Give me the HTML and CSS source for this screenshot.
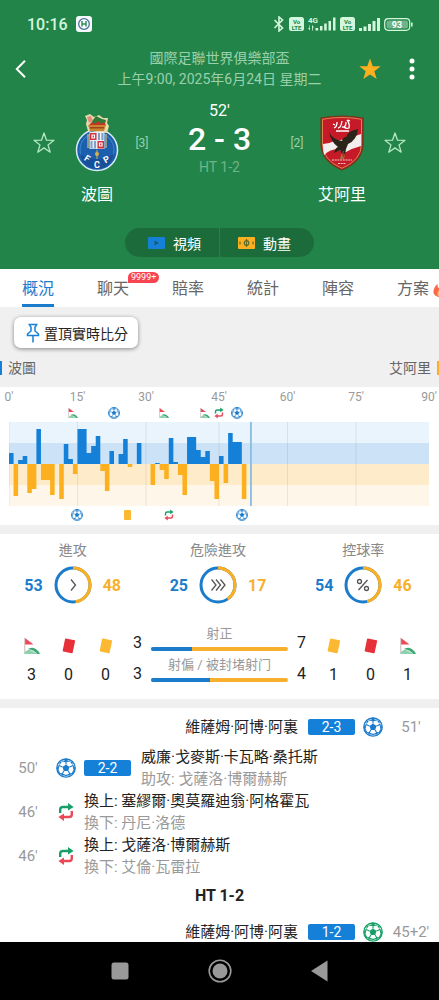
FILE: index.html
```html
<!DOCTYPE html>
<html lang="zh-Hant">

<head>
    <meta charset="UTF-8">
    <meta name="viewport" content="width=device-width, initial-scale=1">
    <title>波圖 2 - 3 艾阿里</title>
    <link rel="stylesheet" href="styles.css">
</head>

<body>
    <!-- 共用圖示 -->
    <svg class="sprite" aria-hidden="true">
        <symbol id="ball" viewBox="0 0 20 20">
            <circle cx="10" cy="10" r="9.2" fill="#fff" stroke="currentColor" stroke-width="1.3" />
            <path fill="currentColor" d="M10 6.4l3.5 2.5-1.3 4.1H7.8L6.5 8.9zM6.8 1.4L10 3.4l3.2-2L10 .6zM1.2 7.4l1 3.6-1.5.6zM3.6 4l2.6-.4L3.2 7.2zM18.8 7.4l-1 3.6 1.5.6zM16.4 4l-2.6-.4 3 3.6zM3.4 15l3.4.3 1 3.5zM16.6 15l-3.4.3-1 3.5z" />
            <path fill="none" stroke="currentColor" stroke-width="1.1" d="M10 6.4V3M6.5 8.9L3 7.4M13.5 8.9L17 7.4M7.8 13l-1.6 3M12.2 13l1.6 3M6 3l4 .6L14 3M3 7l-1 5 2 4M17 7l1 5-2 4M6 16l4 1.6 4-1.6" />
        </symbol>
        <symbol id="sub" viewBox="0 0 16 20">
            <path fill="none" stroke="#16a068" stroke-width="2.4" d="M2.2 11V7.5Q2.2 5 5 5h6" />
            <path fill="#16a068" d="M10 1l5.6 4L10 8.6z" />
            <path fill="none" stroke="#ea4a58" stroke-width="2.4" d="M13.8 9v3.5q0 2.5-2.8 2.5H5" />
            <path fill="#ea4a58" d="M6 19L.4 15 6 11.4z" />
        </symbol>
        <symbol id="corner" viewBox="0 0 16 16">
            <path fill="#ea4a58" d="M1 0l8.5 6.5H1z" />
            <path fill="none" stroke="#c9b7b7" stroke-width="1" d="M.8 0v15" />
            <path fill="#8fd0ae" d="M0 16q1-3 5-4.5l9 4.5z" />
            <path fill="#3fa873" d="M4 11q5-2.5 8.5.5 2.5 1.500 3.500 4.500h-2.500Q10 12 4 11z" />
        </symbol>
        <symbol id="card" viewBox="0 0 14 16">
            <path fill="currentColor" d="M4 .5l8.500 1.800q.8.2.6 1L10.600 14.700q-.2.800-1 .6L1.300 13.500q-.8-.2-.6-1L3 1.200Q3.200.3 4 .5z" />
        </symbol>
        <symbol id="star-line" viewBox="0 0 22 22">
            <path fill="none" stroke="currentColor" stroke-width="1.3" stroke-linejoin="round" d="M11 1l2.500 7.200 7.500.1-6 4.600 2.200 7.300L11 15.900l-6.200 4.300L7 12.900 1 8.300l7.500-.1z" />
        </symbol>
        <symbol id="signal" viewBox="0 0 21 13">
            <path fill="#d3f7dc" d="M0 10h3v3H0zM4.500 8.500h3V13h-3zM9 6h3v7H9zM13.500 3h3v10h-3zM18 0h3v13h-3z" />
        </symbol>
    </svg>

    <header class="header">
        <div class="status-bar">
            <span class="clock">10:16</span>
            <svg class="app-icon" viewBox="0 0 16 16" aria-hidden="true">
                <rect width="16" height="16" rx="3" fill="#f4f8fb" />
                <circle cx="8" cy="8" r="5.300" fill="#fff" stroke="#4a6fa0" stroke-width="1.300" />
                <path stroke="#2f8f62" stroke-width="1.500" d="M6 5v5.500M10 5v5.500M6 8h4" />
            </svg>
            <div class="status-icons" aria-hidden="true">
                <svg width="12" height="16" viewBox="0 0 12 16">
                    <path fill="none" stroke="#d3f7dc" stroke-width="1.600" d="M1.500 4l8 8L6 15V1l3.500 3-8 8" />
                </svg>
                <svg width="15" height="14" viewBox="0 0 15 14">
                    <rect width="15" height="14" rx="2.500" fill="#d3f7dc" />
                    <text x="7.500" y="6.500" text-anchor="middle" font-size="6" font-weight="700" fill="#228448">Vo</text>
                    <text x="7.500" y="12.500" text-anchor="middle" font-size="6" font-weight="700" fill="#228448">LTE</text>
                </svg>
                <svg width="28" height="14" viewBox="0 0 28 14">
                    <text x="0" y="6" font-size="8" font-weight="700" fill="#d3f7dc">4G</text>
                    <path fill="#d3f7dc" d="M1.500 8v3H0l2 2.500V8zM4 13.500V8l2 2.500H4.800v3zM7.500 11h2.700v2.500H7.500zM12 9h2.500v4.500H12zM16.200 6.500h2.500v7h-2.500zM20.500 4H23v9.500h-2.500zM25 .5h2.500v13H25z" />
                </svg>
                <svg width="15" height="14" viewBox="0 0 15 14">
                    <rect width="15" height="14" rx="2.500" fill="#d3f7dc" />
                    <text x="7.500" y="6.500" text-anchor="middle" font-size="6" font-weight="700" fill="#228448">Vo</text>
                    <text x="7.500" y="12.500" text-anchor="middle" font-size="6" font-weight="700" fill="#228448">LTE</text>
                </svg>
                <svg width="21" height="13"><use href="#signal" /></svg>
                <svg width="29" height="13" viewBox="0 0 29 13">
                    <rect x=".7" y=".7" width="25" height="11.600" rx="3.500" fill="none" stroke="#d3f7dc" stroke-width="1.200" />
                    <rect x="2.500" y="2.500" width="21.500" height="8" rx="2" fill="#6fb488" />
                    <path fill="#d3f7dc" d="M27 4.500h1.600v4H27z" />
                    <text x="13" y="9.800" text-anchor="middle" font-size="9" font-weight="700" fill="#fff">93</text>
                </svg>
            </div>
        </div>

        <div class="title-bar">
            <button class="icon-btn back" aria-label="返回">
                <svg width="11" height="18" viewBox="0 0 11 18">
                    <path fill="none" stroke="currentColor" stroke-width="2" d="M10 .8L1.800 9l8.200 8.200" />
                </svg>
            </button>
            <div class="league">
                <div>國際足聯世界俱樂部盃</div>
                <div>上午9:00, 2025年6月24日 星期二</div>
            </div>
            <div class="actions">
                <button class="icon-btn fav" aria-label="收藏">
                    <svg width="22" height="22" viewBox="0 0 22 22">
                        <path fill="currentColor" d="M11 .5l2.700 7.700 8 .1-6.400 4.900 2.400 7.800L11 16.400 4.300 21l2.400-7.800L.3 8.300l8-.1z" />
                    </svg>
                </button>
                <button class="icon-btn" aria-label="更多">
                    <svg width="10" height="22" viewBox="0 0 10 22">
                        <g fill="currentColor"><circle cx="5" cy="3" r="2.500" /><circle cx="5" cy="11" r="2.500" /><circle cx="5" cy="19" r="2.500" /></g>
                    </svg>
                </button>
            </div>
        </div>

        <div class="match">
            <button class="icon-btn star" aria-label="關注波圖"><svg width="22" height="22"><use href="#star-line" /></svg></button>
            <svg class="crest" width="44" height="58" viewBox="0 0 44 58" role="img" aria-label="波圖隊徽">
                <circle cx="22" cy="36" r="20.500" fill="#1c5fae" stroke="#d8ecf7" stroke-width="1.500" />
                <circle cx="22" cy="36" r="17" fill="none" stroke="#3f8bd0" stroke-width="1" />
                <path fill="#174f98" d="M5 40q17 10 34 0-3 14-17 15Q8 54 5 40z" />
                <path fill="#e8dcae" d="M13 17l-2-7 1-4-2-4 5-2 4 3 5-2 4 3 5 0-1 5 2 3-2 7z" />
                <path fill="#e58a7c" d="M12 3l4-1 2 5-4 2z" />
                <path fill="#2f7a35" d="M18 6l3-4 6 3 4 1-1 4H16z" />
                <path fill="#c93327" d="M14 11l3-3 3 2 3-3 3 3 3-2 2 3z" />
                <path fill="#c9852f" d="M13 11h18l-2 6H15z" />
                <path fill="#a3421f" d="M15 13h14v1.500H15z" />
                <path fill="#d6c06a" d="M12 20h2v14h-2zM30 20h2v14h-2z" opacity=".6" />
                <rect x="14.500" y="18" width="15" height="17" fill="#e9eef4" />
                <path fill="#d5303c" d="M15 19h6.500v7H15zM22.500 27H29v7.500h-6.500z" />
                <path fill="#7fa0c8" d="M23 19h5.500v7H23zM15.500 27H21v7.500h-5.500z" />
                <path fill="none" stroke="#fff" stroke-width="1.200" d="M17 21h2.500v3H17zM24.500 29H27v3h-2.500zM25.700 19v7M18.200 27v7" />
                <circle cx="22" cy="40" r="2" fill="#d9b14a" />
                <path stroke="#d9b14a" d="M22 36v9" />
                <g fill="#fff" font-size="9" font-weight="700" text-anchor="middle">
                    <text transform="translate(10.500 47) rotate(32)">F</text>
                    <text x="22" y="54">C</text>
                    <text transform="translate(33 48) rotate(-30)">P</text>
                </g>
            </svg>
            <span class="rank">[3]</span>
            <div class="score">
                <div class="minute">52'</div>
                <div class="goals">2 - 3</div>
                <div class="half">HT 1-2</div>
            </div>
            <span class="rank">[2]</span>
            <svg class="crest" width="44" height="56" viewBox="0 0 44 56" role="img" aria-label="艾阿里隊徽">
                <path fill="#c71a28" stroke="#6d3a1c" stroke-width="1.200" d="M1 3Q22-1 43 3v26q0 17-21 26Q1 46 1 29z" />
                <path fill="none" stroke="#d9a05a" stroke-width=".8" d="M2.500 4.300Q22 .6 41.500 4.300V29q0 16-19.500 24.300Q2.500 45 2.500 29z" />
                <path fill="#f2eeee" d="M3 29q6 0 11-3l13-2 14-5v12q-8 2-15 6-4 1-8-3-8 0-14 6Q3 36 3 29z" />
                <path fill="none" stroke="#fff" stroke-width="1.300" d="M14 13q3-1 3-6m1 6q3 0 4-7m0 6q4 1 4-5m1-2q3 4 2 8-3 1-5-1M13 9l2 1M28 5l2 1M16 16h13" />
                <path fill="#2b2419" d="M9 17q3 7 13 9 1-4 4-4 2-6 12-8-1 11-10 15l-2 5-1 6-2-4-1 4-2-5-6 3q1-5 4-6-7-5-9-15z" />
                <path fill="#9c763a" d="M22 37l1 6 2-5-1 6h-4z" />
                <path stroke="#f4c9c4" stroke-width="1.200" stroke-dasharray="2 .7" d="M12 45h20M18 48.500h8" />
            </svg>
            <button class="icon-btn star" aria-label="關注艾阿里"><svg width="22" height="22"><use href="#star-line" /></svg></button>
            <div class="team-name home-name">波圖</div>
            <div class="team-name away-name">艾阿里</div>
        </div>

        <div class="media">
            <button class="media-btn">
                <svg width="17" height="12" viewBox="0 0 17 12"><rect width="17" height="12" rx="1" fill="#1480d8" /><path fill="#1b5a6e" d="M6.500 3.500l4.500 2.500-4.500 2.500z" /></svg>
                視頻
            </button>
            <button class="media-btn">
                <svg width="17" height="12" viewBox="0 0 17 12"><rect width="17" height="12" rx="1" fill="#fcb01f" /><path fill="none" stroke="#5e6b2a" stroke-width="1.200" d="M8.500 2v8M2 4.500v3M15 4.500v3" /><circle cx="8.500" cy="6" r="2.300" fill="none" stroke="#5e6b2a" stroke-width="1.200" /></svg>
                動畫
            </button>
        </div>
    </header>

    <nav class="tabs">
        <a class="tab active" href="#">概況</a>
        <a class="tab" href="#">聊天<span class="count">9999+</span></a>
        <a class="tab" href="#">賠率</a>
        <a class="tab" href="#">統計</a>
        <a class="tab" href="#">陣容</a>
        <a class="tab" href="#">方案<svg class="flame" width="14" height="16" viewBox="0 0 14 16" aria-hidden="true"><path fill="#f9694a" d="M7 0q1 3 4 6 3 3 2 6-2 4-6 4-5 0-6.500-4Q0 7 4.500 3q0 3 1 4 2-3 1.500-7z" /><path fill="#fcb47a" d="M7 8q3 3 2 7H5q-2-3 2-7z" /></svg></a>
    </nav>

    <main class="content">
        <div class="pin-area">
            <button class="pin-btn">
                <svg width="14" height="20" viewBox="0 0 14 20"><path fill="none" stroke="#1480d8" stroke-width="1.500" d="M2.500 1.500h9M4 1.500v1.500l1 1v4l-3.500 3v1.500h11V11L9 8V4l1-1V1.500M7 12.500v7" /></svg>
                置頂實時比分
            </button>
            <div class="sides">
                <span class="side side-home">波圖</span>
                <span class="side side-away">艾阿里</span>
            </div>
        </div>

        <!-- 走勢圖:每分鐘一格,共 92 格 -->
        <section class="trend">
            <div class="axis">
                <span>0'</span><span>15'</span><span>30'</span><span>45'</span><span>60'</span><span>75'</span><span>90'</span>
            </div>
            <div class="markers">
                <span style="grid-column: 15"><svg width="10" height="10"><use href="#corner" /></svg></span>
                <span class="blue" style="grid-column: 24"><svg width="12" height="12"><use href="#ball" /></svg></span>
                <span style="grid-column: 35"><svg width="10" height="10"><use href="#corner" /></svg></span>
                <span style="grid-column: 44"><svg width="10" height="10"><use href="#corner" /></svg></span>
                <span style="grid-column: 47"><svg width="10" height="12"><use href="#sub" /></svg></span>
                <span class="blue" style="grid-column: 51"><svg width="12" height="12"><use href="#ball" /></svg></span>
            </div>
            <svg class="bars" viewBox="0 0 92 84" preserveAspectRatio="none" role="img" aria-label="進攻走勢">
                <path fill="#eaf4fc" d="M0 0h92v21H0z" />
                <path fill="#cce2f6" d="M0 21h92v21H0z" />
                <path fill="#fdebc9" d="M0 42h92v21H0z" />
                <path fill="#fef7e9" d="M0 63h92v21H0z" />
                <path class="grid-line" d="M0 0v84M15 0v84M30 0v84M46 0v84M61 0v84M76 0v84" />
                <path fill="#1480d8" d="M0 42v-11h1v11zM2 42v-4h1v4zM3 42v-8h1v8zM6 42v-35h1v35zM12 42v-20h1v20zM13 42v-5h1v5zM15 42v-35h2v35zM17 42v-11h1v11zM18 42v-18h1v18zM19 42v-28h1v28zM22 42v-13h1v13zM24 42v-10h1v10zM25 42v-25h1v25zM28 42v-21h1v21zM32 42v-1h1v1zM35 42v-26h1v26zM36 42v-2h1v2zM39 42v-27h2v27zM41 42v-14h1v14zM42 42v-7h1v7zM43 42v-13h1v13zM46 42v-8h1v8zM48 42v-31h1v31zM49 42v-22h2v22z" />
                <path fill="#fcb01f" d="M1 42v32h1v-32zM4 42v29h1v-29zM5 42v25h1v-25zM7 42v16h2v-16zM9 42v31h1v-31zM11 42v35h1v-35zM14 42v10h1v-10zM20 42v7h1v-7zM21 42v27h1v-27zM26 42v3h1v-3zM31 42v21h1v-21zM33 42v6h1v-6zM34 42v15h1v-15zM37 42v11h1v-11zM38 42v31h1v-31zM44 42v17h1v-17zM45 42v35h1v-35zM47 42v19h1v-19zM51 42v35h1v-35z" />
                <path class="now-line" d="M53 0v84" />
            </svg>
            <div class="markers">
                <span class="blue" style="grid-column: 16"><svg width="12" height="12"><use href="#ball" /></svg></span>
                <span style="grid-column: 27"><i class="mini-card"></i></span>
                <span style="grid-column: 36"><svg width="10" height="12"><use href="#sub" /></svg></span>
                <span class="blue" style="grid-column: 52"><svg width="12" height="12"><use href="#ball" /></svg></span>
            </div>
        </section>

        <section class="stats">
            <div class="rings">
                <div class="ring-stat">
                    <div class="stat-title">進攻</div>
                    <div class="ring-row">
                        <b class="blue">53</b>
                        <svg width="38" height="38" viewBox="0 0 38 38" fill="none">
                            <circle class="ring" cx="19" cy="19" r="17" /><circle class="ring-away" cx="19" cy="19" r="17" pathLength="100" stroke-dasharray="47.5 100" />
                            <path class="glyph" d="M17 13.500l4.500 5.500-4.500 5.500" />
                        </svg>
                        <b class="orange">48</b>
                    </div>
                </div>
                <div class="ring-stat">
                    <div class="stat-title">危險進攻</div>
                    <div class="ring-row">
                        <b class="blue">25</b>
                        <svg width="38" height="38" viewBox="0 0 38 38" fill="none">
                            <circle class="ring" cx="19" cy="19" r="17" /><circle class="ring-away" cx="19" cy="19" r="17" pathLength="100" stroke-dasharray="40.5 100" />
                            <path class="glyph" d="M12.500 13.500l4.500 5.500-4.500 5.500M17 13.500l4.500 5.500-4.500 5.500M21.500 13.500L26 19l-4.500 5.500" />
                        </svg>
                        <b class="orange">17</b>
                    </div>
                </div>
                <div class="ring-stat">
                    <div class="stat-title">控球率</div>
                    <div class="ring-row">
                        <b class="blue">54</b>
                        <svg width="38" height="38" viewBox="0 0 38 38" fill="none">
                            <circle class="ring" cx="19" cy="19" r="17" /><circle class="ring-away" cx="19" cy="19" r="17" pathLength="100" stroke-dasharray="46 100" />
                            <path class="glyph" d="M23.500 14l-9 10" /><circle class="glyph" cx="15.500" cy="15.500" r="2" /><circle class="glyph" cx="22.500" cy="22.500" r="2" />
                        </svg>
                        <b class="orange">46</b>
                    </div>
                </div>
            </div>

            <div class="details">
                <div class="tally">
                    <div><svg width="16" height="16"><use href="#corner" /></svg>3</div>
                    <div><svg class="red" width="14" height="16"><use href="#card" /></svg>0</div>
                    <div><svg class="yellow" width="14" height="16"><use href="#card" /></svg>0</div>
                </div>
                <div class="shots">
                    <div class="shot">
                        <span>3</span>
                        <div class="shot-mid">
                            <div class="shot-label">射正</div>
                            <div class="shot-bar"><div style="width: 30%"></div></div>
                        </div>
                        <span>7</span>
                    </div>
                    <div class="shot">
                        <span>3</span>
                        <div class="shot-mid">
                            <div class="shot-label">射偏 / 被封堵射门</div>
                            <div class="shot-bar"><div style="width: 43%"></div></div>
                        </div>
                        <span>4</span>
                    </div>
                </div>
                <div class="tally">
                    <div><svg class="yellow" width="14" height="16"><use href="#card" /></svg>1</div>
                    <div><svg class="red" width="14" height="16"><use href="#card" /></svg>0</div>
                    <div><svg width="16" height="16"><use href="#corner" /></svg>1</div>
                </div>
            </div>
        </section>

        <section class="events">
            <div class="event away">
                <div class="names"><div>維薩姆·阿博·阿裏</div></div>
                <span class="goal-score">2-3</span>
                <svg class="event-icon blue" width="20" height="20"><use href="#ball" /></svg>
                <span class="time">51'</span>
            </div>
            <div class="event">
                <span class="time">50'</span>
                <svg class="event-icon blue" width="20" height="20"><use href="#ball" /></svg>
                <span class="goal-score">2-2</span>
                <div class="names">
                    <div>威廉·戈麥斯·卡瓦略·桑托斯</div>
                    <div class="muted">助攻: 戈薩洛·博爾赫斯</div>
                </div>
            </div>
            <div class="event">
                <span class="time">46'</span>
                <svg class="event-icon" width="20" height="20"><use href="#sub" /></svg>
                <div class="names">
                    <div>換上: 塞繆爾·奧莫羅迪翁·阿格霍瓦</div>
                    <div class="muted">換下: 丹尼·洛德</div>
                </div>
            </div>
            <div class="event">
                <span class="time">46'</span>
                <svg class="event-icon" width="20" height="20"><use href="#sub" /></svg>
                <div class="names">
                    <div>換上: 戈薩洛·博爾赫斯</div>
                    <div class="muted">換下: 艾倫·瓦雷拉</div>
                </div>
            </div>
            <div class="period">HT 1-2</div>
            <div class="event away">
                <div class="names"><div>維薩姆·阿博·阿裏</div></div>
                <span class="goal-score">1-2</span>
                <svg class="event-icon green" width="20" height="20"><use href="#ball" /></svg>
                <span class="time">45+2'</span>
            </div>
        </section>
    </main>

    <!-- 系統導航列 -->
    <footer class="system-nav">
        <button class="icon-btn" aria-label="最近"><svg width="24" height="24" viewBox="0 0 24 24"><rect x="3.500" y="3.500" width="17" height="17" rx="2.500" fill="currentColor" /></svg></button>
        <button class="icon-btn" aria-label="主頁"><svg width="24" height="24" viewBox="0 0 24 24"><circle cx="12" cy="12" r="10.800" fill="none" stroke="currentColor" stroke-width="1.600" /><circle cx="12" cy="12" r="7.500" fill="currentColor" /></svg></button>
        <button class="icon-btn" aria-label="返回上一頁"><svg width="24" height="24" viewBox="0 0 24 24"><path fill="currentColor" d="M3 12L19.500 1.500v21z" /></svg></button>
    </footer>
</body>

</html>
```

FILE: styles.css
```css
* {
    box-sizing: border-box;
}

body {
    margin: 0;
    height: 100vh;
    display: flex;
    flex-direction: column;
    overflow: hidden;
    background: #fff;
    color: #222;
    font-family: Roboto, "Noto Sans CJK TC", sans-serif;
    font-size: 16px;
}

button {
    font: inherit;
    border: none;
    cursor: pointer;
}

svg {
    display: block;
    flex-shrink: 0;
}

.sprite {
    position: absolute;
    width: 0;
    height: 0;
}

.icon-btn {
    display: flex;
    padding: 0;
    background: none;
    color: inherit;
}

.blue {
    color: #1c7ccc;
}

.orange {
    color: #f8b02c;
}

.green {
    color: #16a068;
}

.red {
    color: #e8303a;
}

.yellow {
    color: #fcb830;
}

/* 頂部 */
.header {
    flex-shrink: 0;
    padding-bottom: 12px;
    background: #228448;
    color: #fff;
}

.status-bar {
    display: flex;
    align-items: center;
    gap: 8px;
    height: 48px;
    padding: 0 26px 0 27px;
}

.clock {
    font-weight: 500;
    color: #d3f7dc;
}

.app-icon {
    width: 16px;
    height: 16px;
}

.status-icons {
    display: flex;
    align-items: center;
    gap: 4px;
    margin-left: auto;
}

.title-bar {
    display: grid;
    grid-template-columns: 94px 1fr 94px;
    align-items: center;
}

.back {
    padding-left: 15px;
}

.league {
    text-align: center;
    font-size: 14px;
    line-height: 21px;
    color: #9bd0ac;
    white-space: nowrap;
}

.actions {
    display: flex;
    justify-content: flex-end;
    align-items: center;
    gap: 26px;
    padding-right: 22px;
}

.fav {
    color: #fcb01f;
}

/* 比分區 */
.match {
    display: grid;
    grid-template-columns: 30px 76px 14px 1fr 14px 76px 30px;
    grid-template-rows: 84px 20px;
    align-items: center;
    justify-items: center;
    margin-top: 11px;
    padding: 0 29px;
}

.star {
    color: #b4e6c2;
}

.rank {
    font-size: 12px;
    color: #9bd0ac;
}

.score {
    align-self: start;
    text-align: center;
}

.minute {
    line-height: 20px;
}

.goals {
    font-size: 32px;
    font-weight: 500;
    line-height: 36px;
}

.half {
    font-size: 14px;
    line-height: 20px;
    color: #6fb488;
}

.team-name {
    line-height: 20px;
    white-space: nowrap;
}

.home-name {
    grid-column: 2;
}

.away-name {
    grid-column: 6;
}

.media {
    display: flex;
    justify-content: center;
    gap: 1px;
    margin-top: 23px;
}

.media-btn {
    display: flex;
    align-items: center;
    gap: 8px;
    width: 94px;
    height: 29px;
    background: #1c6c3b;
    color: #fff;
    font-size: 14px;
}

.media-btn:first-child {
    padding: 0 0 0 23px;
    border-radius: 15px 0 0 15px;
}

.media-btn:last-child {
    padding: 0 0 0 18px;
    border-radius: 0 15px 15px 0;
}

/* 分頁 */
.tabs {
    display: flex;
    flex-shrink: 0;
    gap: 43px;
    padding-left: 22px;
    overflow: hidden;
}

.tab {
    position: relative;
    flex-shrink: 0;
    width: 32px;
    height: 38px;
    line-height: 40px;
    color: #666;
    text-decoration: none;
    white-space: nowrap;
}

.tab.active {
    color: #1c7ccc;
    border-bottom: 3px solid #1c7ccc;
}

.count {
    position: absolute;
    left: 31px;
    top: 3px;
    padding: 0 3px;
    border-radius: 6px 6px 6px 0;
    background: #f84450;
    color: #fff;
    font-size: 9px;
    line-height: 11px;
}

.flame {
    position: absolute;
    left: 36px;
    top: 12px;
}

.content {
    flex: 1;
    min-height: 0;
    overflow-y: auto;
    scrollbar-width: none;
    background: #f0f0f0;
}

.pin-area {
    padding: 10px 0 12px;
}

.pin-btn {
    display: flex;
    align-items: center;
    gap: 4px;
    height: 31px;
    margin-left: 14px;
    padding: 0 10px 0 12px;
    border-radius: 7px;
    background: #fff;
    box-shadow: 0 1px 4px rgba(0, 0, 0, 0.45);
    color: #222;
    font-size: 14px;
}

.sides {
    display: flex;
    justify-content: space-between;
    align-items: center;
    margin-top: 13px;
}

.side {
    padding: 0 6px;
    font-size: 14px;
    line-height: 14px;
    color: #666;
}

.side-home {
    border-left: 2px solid #1480d8;
}

.side-away {
    border-right: 2px solid #fcb01f;
}

/* 走勢圖 */
.trend {
    padding: 3px 10px 1px 9px;
    background: #fff;
}

.axis {
    display: grid;
    grid-template-columns: 15fr 15fr 16fr 15fr 15fr 16fr 0;
    font-size: 12px;
    line-height: 14px;
    color: #999;
}

.axis span,
.markers span {
    display: flex;
    align-items: center;
    justify-content: center;
    width: 0;
}

.markers {
    display: grid;
    grid-template-columns: repeat(92, minmax(0, 1fr));
    height: 18px;
}

.mini-card {
    flex-shrink: 0;
    width: 7px;
    height: 10px;
    border-radius: 1px;
    background: #fcb830;
}

.bars {
    width: 100%;
    height: 84px;
}

.grid-line {
    stroke: #000;
    stroke-opacity: 0.08;
    vector-effect: non-scaling-stroke;
}

.now-line {
    stroke: #8fc0e4;
    stroke-width: 2px;
    vector-effect: non-scaling-stroke;
}

/* 統計 */
.stats {
    margin-top: 9px;
    padding: 6px 0 14px;
    background: #fff;
}

.rings {
    display: grid;
    grid-template-columns: repeat(3, 1fr);
    padding-right: 3px;
}

.stat-title {
    margin-bottom: 6px;
    text-align: center;
    font-size: 14px;
    line-height: 20px;
    color: #888;
}

.ring-row {
    display: flex;
    align-items: center;
    justify-content: center;
    gap: 11px;
}

.ring {
    stroke: #1c7ccc;
    stroke-width: 3px;
}

.ring-away {
    stroke: #fcb01f;
    stroke-width: 3px;
    transform: rotate(-90deg);
    transform-origin: center;
}

.glyph {
    stroke: #555;
    stroke-width: 1.3px;
}

.details {
    display: flex;
    gap: 9px;
    margin-top: 21px;
    padding: 0 13px;
}

.tally {
    display: grid;
    grid-template-columns: repeat(3, 37px);
    padding-top: 13px;
}

.tally div {
    display: flex;
    flex-direction: column;
    align-items: center;
    gap: 11px;
    line-height: 20px;
}

.shots {
    flex: 1;
    display: flex;
    flex-direction: column;
    gap: 5px;
}

.shot {
    display: flex;
    align-items: flex-end;
    gap: 9px;
    line-height: 16px;
}

.shot-mid {
    flex: 1;
}

.shot-label {
    margin-bottom: 4px;
    text-align: center;
    font-size: 13px;
    line-height: 18px;
    color: #999;
    white-space: nowrap;
}

.shot-bar {
    height: 4px;
    border-radius: 2px;
    overflow: hidden;
    background: #f8b02c;
}

.shot-bar div {
    height: 100%;
    background: #1c7ccc;
}

/* 事件列表 */
.events {
    margin-top: 9px;
    background: #fff;
}

.event {
    display: flex;
    align-items: center;
    min-height: 38px;
    font-size: 15px;
    line-height: 22px;
}

.event.away {
    justify-content: flex-end;
}

.time {
    width: 56px;
    text-align: center;
    color: #999;
}

.event-icon {
    margin-right: 8px;
}

.goal-score {
    width: 47px;
    margin-right: 10px;
    border-radius: 2px;
    background: #1480d8;
    color: #fff;
    font-size: 14px;
    line-height: 16px;
    text-align: center;
}

.away .names {
    margin-right: 10px;
}

.away .goal-score {
    margin-right: 8px;
}

.away .event-icon {
    margin-right: 0;
}

.muted {
    color: #999;
}

.period {
    font-weight: 700;
    line-height: 35px;
    text-align: center;
}

.system-nav {
    display: flex;
    flex-shrink: 0;
    align-items: center;
    justify-content: center;
    gap: 76px;
    height: 58px;
    background: #000;
    color: #999;
}
```
